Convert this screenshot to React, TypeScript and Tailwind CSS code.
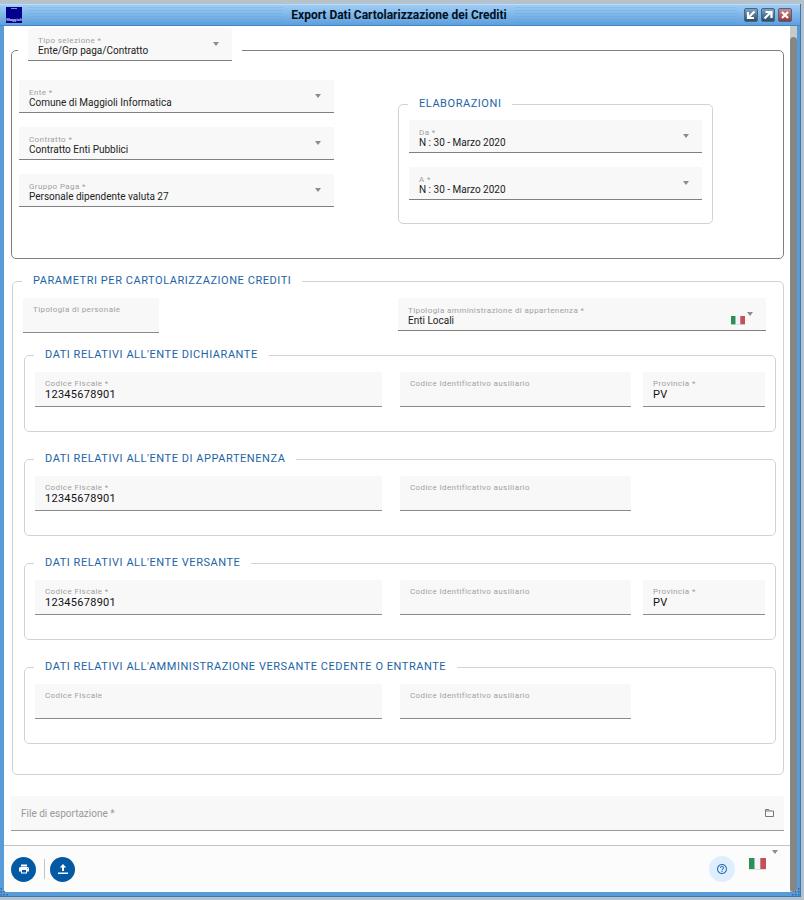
import React from 'react'
import { MdHelpOutline, MdPrint } from 'react-icons/md'

const base = 'relative flex flex-col rounded-t-xs border-b bg-[#f8f8f8] px-2.5'

function Arrow() {
  return (
    <svg className="h-1 w-1.5" viewBox="0 0 6 4" aria-hidden="true">
      <path d="M0 0h6L3 4z" fill="#8c8c8c" />
    </svg>
  )
}

function Flag({ className = '' }: { className?: string }) {
  return (
    <svg className={className} viewBox="0 0 18 12" preserveAspectRatio="none" aria-hidden="true">
      <rect x="0" y="1" width="18" height="11" rx="1" fill="#dedede" />
      <rect x="0" y="0" width="6" height="11" fill="#2b8f5a" />
      <rect x="6" y="0" width="6" height="11" fill="#f4f4f4" />
      <rect x="12" y="0" width="6" height="11" fill="#c5505b" />
    </svg>
  )
}

function Grip({ className = '' }: { className?: string }) {
  return (
    <svg className={`absolute bottom-0 h-2 w-2 ${className}`} viewBox="0 0 8 8" fill="#2f6ca6" aria-hidden="true">
      <path d="M6 0h1.500v1.500H6zM3 3h1.500v1.500H3zM6 3h1.500v1.500H6zM0 6h1.500v1.500H0zM3 6h1.500v1.500H3zM6 6h1.500v1.500H6z" />
    </svg>
  )
}

type FieldProps = { id: string; label: string; value?: string; className?: string; flag?: boolean }

function SelectField({ id, label, value = '', className = '', flag }: FieldProps) {
  return (
    <div className={`${base} h-[33px] border-[#808080] pt-[9px] ${className}`}>
      <label htmlFor={id} className="text-[8px] leading-2 tracking-wider text-[#a0a0a0]">{label}</label>
      <select id={id} defaultValue={value} className="h-3 w-full appearance-none bg-transparent text-[10px] leading-3 text-[#222] outline-none">
        <option>{value}</option>
      </select>
      {flag && <Flag className="pointer-events-none absolute top-[18px] right-[21px] h-[9px] w-3.5" />}
      <span className="pointer-events-none absolute top-3.5 right-[13px] flex"><Arrow /></span>
    </div>
  )
}

function TextField({ id, label, value = '', className = '' }: FieldProps) {
  return (
    <div className={`${base} h-[35px] border-[#8a8a8a] pt-2 ${className}`}>
      <label htmlFor={id} className="text-[8px] leading-2 tracking-wider text-[#a0a0a0]">{label}</label>
      <input id={id} defaultValue={value} className="h-3.5 w-full bg-transparent text-[11px] leading-3.5 tracking-wide text-[#111] outline-none" />
    </div>
  )
}

function Group({ title, className = '', children }: { title: string; className?: string; children: React.ReactNode }) {
  return (
    <fieldset className={`min-w-0 rounded-[5px] border border-[#d2d2d2] ${className}`}>
      <legend className="ml-[9px] px-[11px] text-[11px] leading-4 tracking-wider text-[#1d64a6]">{title}</legend>
      {children}
    </fieldset>
  )
}

const enti = [
  { id: 'dichiarante', title: "DATI RELATIVI ALL'ENTE DICHIARANTE", label: 'Codice Fiscale *', cf: '12345678901', prov: 'PV' },
  { id: 'appartenenza', title: "DATI RELATIVI ALL'ENTE DI APPARTENENZA", label: 'Codice Fiscale *', cf: '12345678901' },
  { id: 'versante', title: "DATI RELATIVI ALL'ENTE VERSANTE", label: 'Codice Fiscale *', cf: '12345678901', prov: 'PV' },
  { id: 'cedente', title: "DATI RELATIVI ALL'AMMINISTRAZIONE VERSANTE CEDENTE O ENTRANTE", label: 'Codice Fiscale', cf: '' },
]

const windowButtons = [
  { label: 'Riduci', path: 'M10.500 3.500 4.500 9.500M4 4v6h6', color: 'from-[#7fa3bf] to-[#2d4d66]' },
  { label: 'Ingrandisci', path: 'M3.500 10.500 9.500 4.500M4.500 4h6v6', color: 'from-[#7fa3bf] to-[#2d4d66]' },
  { label: 'Chiudi', path: 'M4 4l6 6M10 4l-6 6', color: 'from-[#c58b91] to-[#9c3038]' },
]

function TitleBar() {
  return (
    <header className="grid h-[22px] grid-cols-[1fr_auto_1fr] items-center border-t border-b border-t-[#b9dcf8] border-b-[#4686c3] bg-linear-to-b from-[#9fcdf4] to-[#5c9fdd] pr-2 pl-1.5">
      <div className="flex items-center gap-1.5">
        <div className="flex h-4 w-4 flex-col items-center justify-between bg-[#00008f]">
          <span className="mt-px h-px w-1.5 bg-[#8f8fd0]" />
          <span className="text-[4px] leading-[6px] font-bold text-[#d0caf8]">Maggioli</span>
        </div>
        <span className="h-4 flex-1 bg-[repeating-linear-gradient(to_bottom,#5a97d033_0px_1px,transparent_1px_3px)]" />
      </div>
      <h1 className="px-2 text-[12px] font-bold text-[#04101c]">Export Dati Cartolarizzazione dei Crediti</h1>
      <div className="flex items-center gap-[3px]">
        <span className="mr-1 h-4 flex-1 bg-[repeating-linear-gradient(to_bottom,#5a97d033_0px_1px,transparent_1px_3px)]" />
        {windowButtons.map((b) => (
          <button key={b.label} type="button" aria-label={b.label} className={`h-3.5 w-3.5 rounded-xs border border-[#41678a] bg-linear-to-b ${b.color}`}>
            <svg viewBox="1 1 12 12" className="h-3 w-3" fill="none" stroke="#fff" strokeWidth="2.2">
              <path d={b.path} />
            </svg>
          </button>
        ))}
      </div>
    </header>
  )
}

export default function App() {
  return (
    <div className="flex min-h-screen flex-col bg-[#b5c2cc] pt-1 pr-[3px] pb-[3px] font-[Roboto,sans-serif]">
      <div className="relative flex flex-1 flex-col border-r border-b border-[#3877b5] bg-[#579bd9]">
        <TitleBar />
        <div className="mr-[3px] mb-1 ml-1 flex flex-1 bg-white">
          <div className="flex min-w-0 flex-1 flex-col">
            <main className="flex-1 pt-0.5 pr-1.5 pb-3.5 pl-[7px]">
              <fieldset className="min-w-0 rounded-[5px] border border-[#808080] pb-[34px]">
                <legend className="ml-1.5 px-2.5 pb-3">
                  <SelectField id="tipo" label="Tipo selezione *" value="Ente/Grp paga/Contratto" className="w-[204px]" />
                </legend>
                <div className="grid grid-cols-2 gap-16 pt-[7px] pr-[70px] pl-[7px]">
                  <div className="flex flex-col gap-3.5">
                    <SelectField id="ente" label="Ente *" value="Comune di Maggioli Informatica" />
                    <SelectField id="contratto" label="Contratto *" value="Contratto Enti Pubblici" />
                    <SelectField id="gruppo" label="Gruppo Paga *" value="Personale dipendente valuta 27" />
                  </div>
                  <Group title="ELABORAZIONI" className="mt-4 pb-[23px]">
                    <div className="flex flex-col gap-3.5 px-2.5 pt-2">
                      <SelectField id="da" label="Da *" value="N : 30 - Marzo 2020" />
                      <SelectField id="a" label="A *" value="N : 30 - Marzo 2020" />
                    </div>
                  </Group>
                </div>
              </fieldset>

              <Group title="PARAMETRI PER CARTOLARIZZAZIONE CREDITI" className="mt-3.5 ml-px pb-[30px]">
                <div className="flex gap-[239px] pt-[9px] pr-[17px] pl-2.5">
                  <TextField id="personale" label="Tipologia di personale" className="w-[136px]" />
                  <SelectField id="amministrazione" label="Tipologia amministrazione di appartenenza *" value="Enti Locali" flag className="flex-1" />
                </div>
                <div className="mt-3.5 flex flex-col gap-[19px] pr-[7px] pl-[11px]">
                  {enti.map((e) => (
                    <Group key={e.id} title={e.title} className="pb-6">
                      <div className="grid grid-cols-[347fr_237fr_122fr] gap-3 px-2.5 pt-[9px]">
                        <TextField id={`cf-${e.id}`} label={e.label} value={e.cf} />
                        <TextField id={`aus-${e.id}`} label="Codice Identificativo ausiliario" className="ml-1.5" />
                        {e.prov && <TextField id={`prov-${e.id}`} label="Provincia *" value={e.prov} />}
                      </div>
                    </Group>
                  ))}
                </div>
              </Group>

              <div className="mt-[21px] flex h-[35px] items-center rounded-t-xs border-b border-[#999] bg-[#f8f8f8] px-2.5">
                <label htmlFor="file" className="text-[10px] text-[#999]">File di esportazione *</label>
                <input id="file" className="min-w-0 flex-1 bg-transparent text-[11px] outline-none" />
                <button type="button" aria-label="Sfoglia">
                  <svg className="h-2 w-[9px]" viewBox="0 0 9 8" fill="none" stroke="#777">
                    <path d="M.5 7.500V.5h3.200l1 1.500h3.800v5.500zM.5 2h4" />
                  </svg>
                </button>
              </div>
            </main>

            <footer className="flex h-[47px] items-center border-t border-[#c4c4c4] bg-[#fcfcfc] pr-3 pl-[7px]">
              <button type="button" aria-label="Stampa" className="flex h-[25px] w-[25px] items-center justify-center rounded-full bg-[#0459a5] text-white">
                <MdPrint className="h-3 w-3" />
              </button>
              <span className="mr-[5px] ml-2 h-5 w-px bg-[#c4c4c4]" />
              <button type="button" aria-label="Esporta" className="flex h-[25px] w-[25px] items-center justify-center rounded-full bg-[#0459a5] text-white">
                <svg className="h-3 w-3" viewBox="0 0 12 12" fill="currentColor">
                  <path d="M6 1 2.800 4.500H5V8h2V4.500h2.200zM1 9.500h10V11H1z" />
                </svg>
              </button>
              <span className="flex-1" />
              <button type="button" aria-label="Aiuto" className="mr-3.5 flex h-[26px] w-[26px] items-center justify-center rounded-full bg-[#deeefc] text-[#2a6cab]">
                <MdHelpOutline className="h-3 w-3" />
              </button>
              <button type="button" aria-label="Lingua" className="flex h-[38px] items-start gap-1.5">
                <Flag className="mt-2 h-3 w-[17px]" />
                <Arrow />
              </button>
            </footer>
          </div>
          <div className="flex w-[7px] flex-col bg-[#c9c9c9] pt-[11px]" aria-hidden="true">
            <span className="flex-1 rounded-sm bg-[#868686]" />
          </div>
        </div>
        <Grip className="left-0 -scale-x-100" />
        <Grip className="right-0" />
      </div>
    </div>
  )
}
